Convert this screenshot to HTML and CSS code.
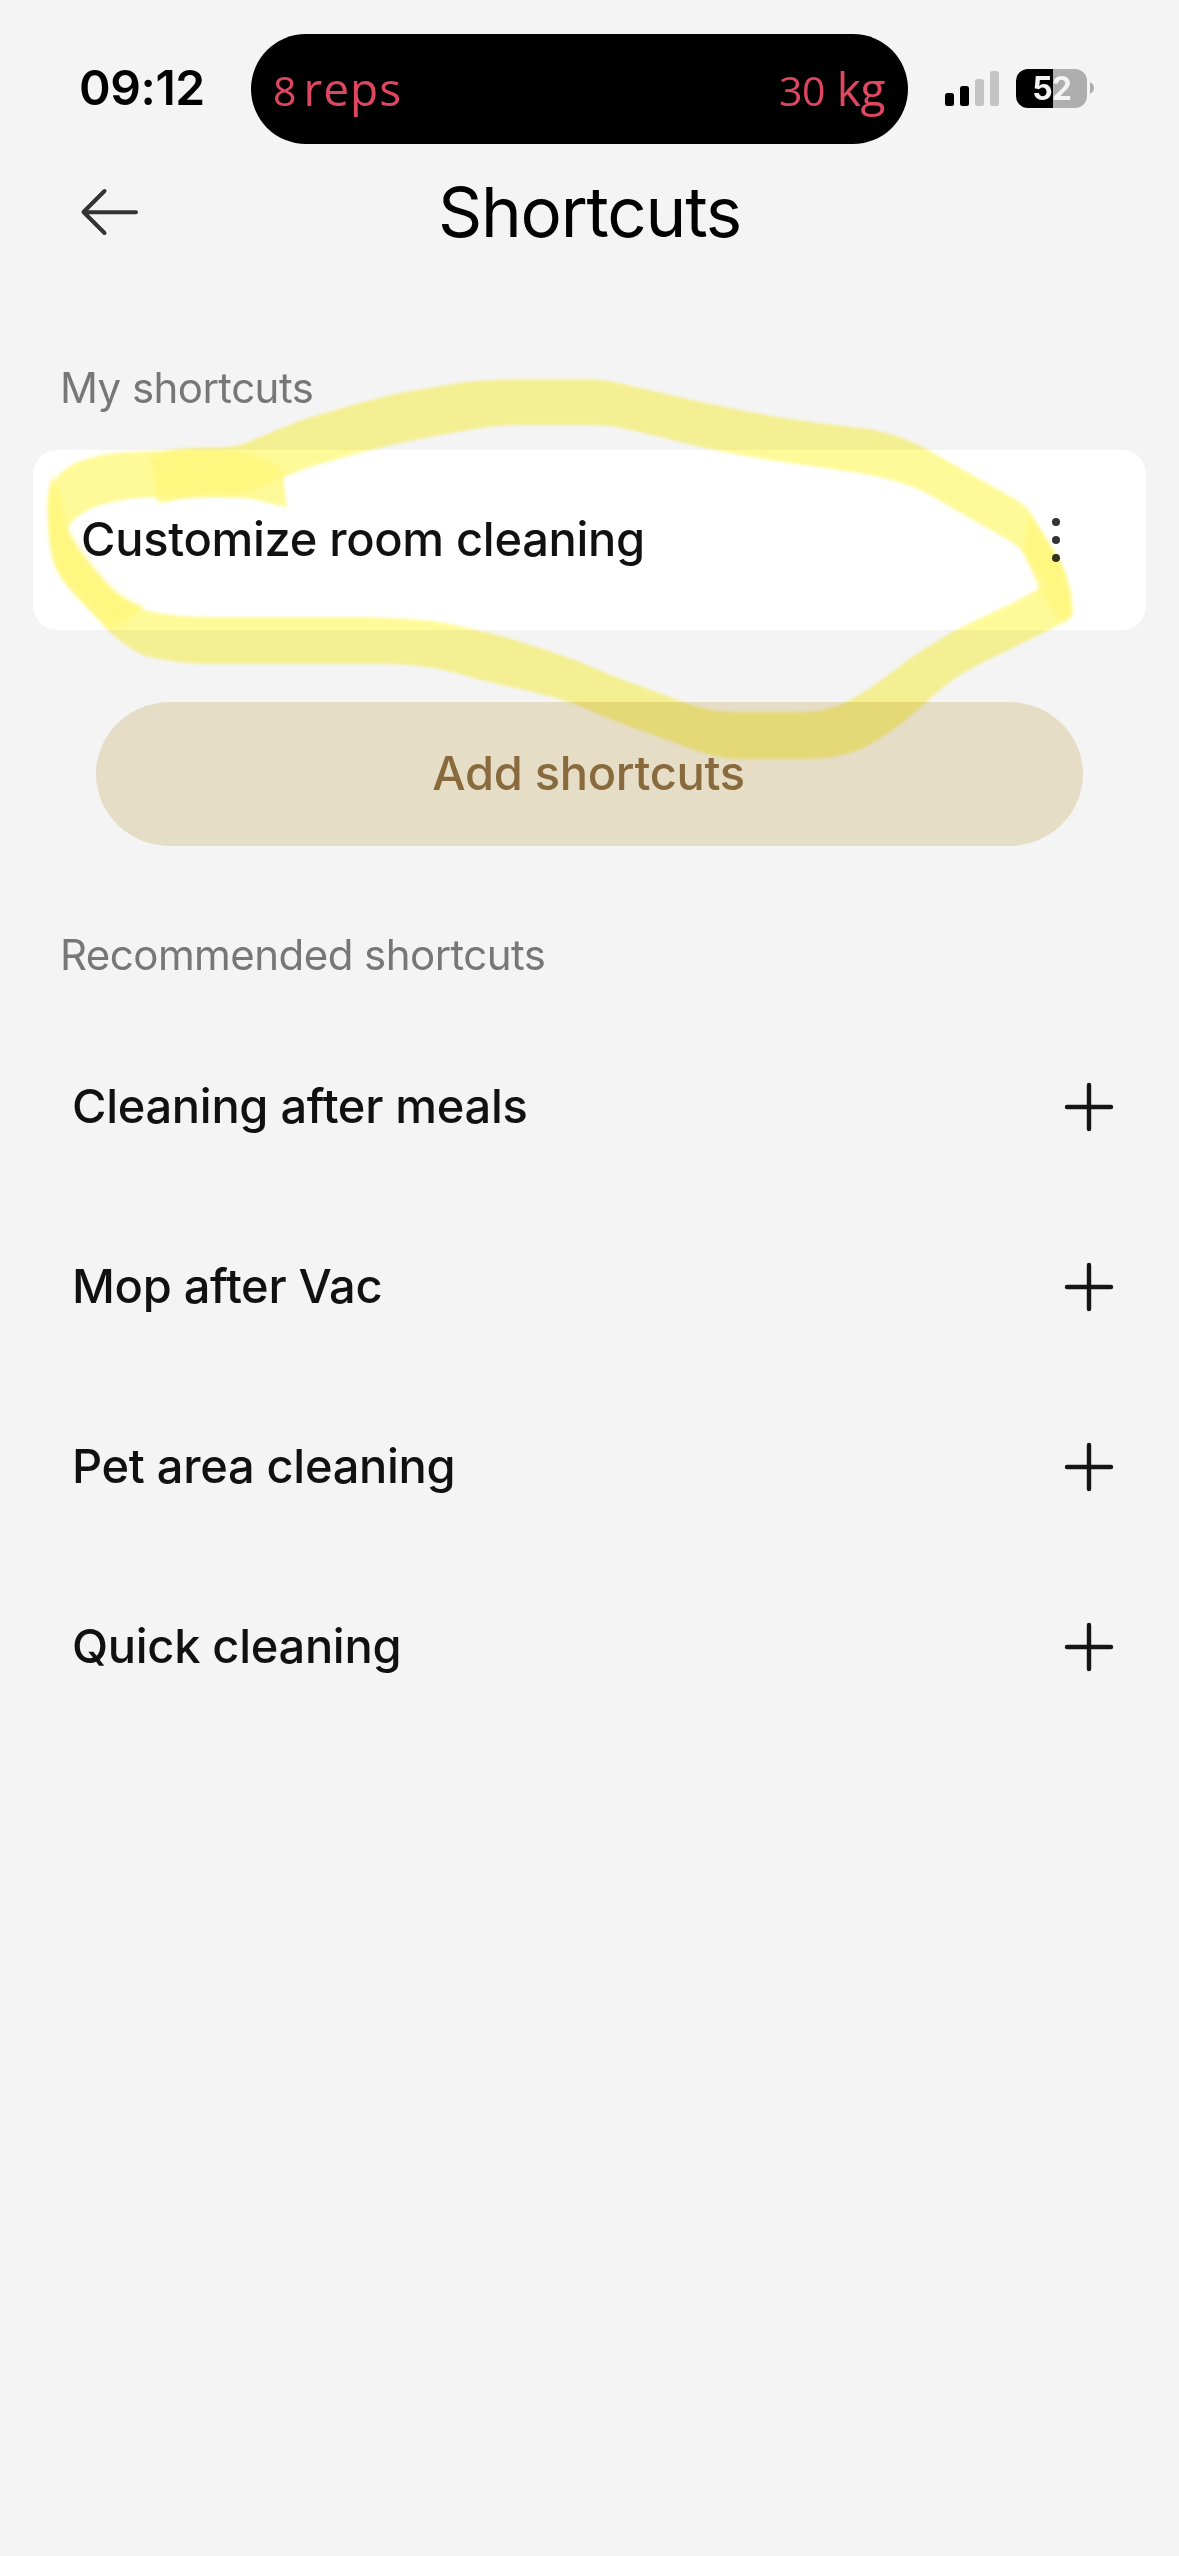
FILE: index.html
```html
<!DOCTYPE html>
<html lang="en">
<head>
<meta charset="utf-8">
<title>Shortcuts</title>
<link rel="stylesheet" href="styles.css">
</head>
<body>
<div class="screen">
  <div class="status-bar">
    <time class="clock">09:12</time>
    <div class="island">
      <span class="metric"><span class="num">8</span><span class="unit">reps</span></span>
      <span class="metric metric-weight"><span class="num">30</span><span class="unit">kg</span></span>
    </div>
    <svg class="signal" width="54" height="36" viewBox="0 0 54 36">
      <rect x="0" y="22" width="9" height="13" rx="2.5" fill="#000"/>
      <rect x="15" y="15" width="9" height="20" rx="2.5" fill="#000"/>
      <rect x="30" y="8" width="9" height="27" rx="2.5" fill="#c4c4c4"/>
      <rect x="45" y="0" width="9" height="35" rx="2.5" fill="#c4c4c4"/>
    </svg>
    <div class="battery"><span class="battery-body">52</span><svg class="battery-nub" width="4" height="12" viewBox="0 0 4 12"><path d="M0 0 C5.3 2.5 5.3 9.500 0 12 Z" fill="#aeaeae"/></svg></div>
  </div>

  <header class="header">
    <svg class="back" width="60" height="48" viewBox="0 0 60 48" fill="none" stroke="#333" stroke-width="4" stroke-linecap="round" stroke-linejoin="round">
      <path d="M25.500 3 L4.500 24 L25.500 45 M4.500 24 L57 24.300"/>
    </svg>
    <h1 class="title">Shortcuts</h1>
  </header>

  <main>
    <h2 class="section-label">My shortcuts</h2>
    <div class="card">
      <span class="label">Customize room cleaning</span>
      <svg class="more" width="10" height="46" viewBox="0 0 10 46" fill="#333">
        <circle cx="5" cy="5" r="4"/><circle cx="5" cy="23" r="4"/><circle cx="5" cy="41" r="4"/>
      </svg>
    </div>
    <button class="add-button" type="button"><span class="label">Add shortcuts</span></button>

    <h2 class="section-label recommended">Recommended shortcuts</h2>
    <ul class="list">
      <li class="row"><span class="label">Cleaning after meals</span><svg class="plus" width="50" height="50" viewBox="0 0 50 50"><path d="M25 3 V47 M3 25 H47"/></svg></li>
      <li class="row"><span class="label">Mop after Vac</span><svg class="plus" width="50" height="50" viewBox="0 0 50 50"><path d="M25 3 V47 M3 25 H47"/></svg></li>
      <li class="row"><span class="label">Pet area cleaning</span><svg class="plus" width="50" height="50" viewBox="0 0 50 50"><path d="M25 3 V47 M3 25 H47"/></svg></li>
      <li class="row"><span class="label">Quick cleaning</span><svg class="plus" width="50" height="50" viewBox="0 0 50 50"><path d="M25 3 V47 M3 25 H47"/></svg></li>
    </ul>
  </main>

  <!-- Hand-drawn marker loop over the saved shortcut -->
  <svg class="marker" width="1179" height="800" viewBox="0 0 1179 800">
    <defs>
      <path id="end" d="M151 457 Q175 448 205 448 Q228 448 240 445 C260 438 290 423 318 415 C350 406 400 391 430 388 C460 382 480 380 510 379.500 H592 C610 380 622 384 640 388 C670 395 700 402 740 410 C790 420 840 426 870 429 C905 437 915 443 930 451 L1020 502 Q1027 507 1032 515 L1057 556 C1069 575 1071 598 1072 613 Q1071 618 1060 622 L1040 590 L1024 553 Q1018 546 1008 540 L935 498 C910 483 890 480 870 475 C830 468 790 464 740 455 C700 448 660 436 617 427 Q606 425 590 425 H520 C490 425 470 430 430 437 C380 446 335 460 310 467 C285 475 260 490 235 496 Q200 493 175 500 Q160 505 157 500 Z"/>
      <path id="start" d="M287 507 C262 502 250 497 230 497 H165 C120 497 80 505 67 529 C66 540 72 545 85 560 C100 580 118 600 140 609 C160 614 180 617 210 617 H365 C400 618 430 620 450 624 C510 636 560 655 580 662 C620 680 650 689 670 697 Q705 712 735 712 H800 Q830 712 850 700 C880 685 910 655 935 643 C960 624 1010 608 1044 585 L1072 613 Q1071 618 1060 624 C1035 638 985 660 960 675 C930 695 915 715 895 728 C860 755 835 759 800 759 H735 C705 756 690 748 670 741 C635 728 610 720 580 706 C540 691 500 686 470 677 Q430 664 380 664 H210 C185 664 165 660 145 656 Q125 647 108 630 C90 610 70 592 60 575 C50 558 48 530 48 500 C50 470 80 454 130 452 C180 450 225 448 248 454 Q275 462 282 470 Z"/>
      <clipPath id="start-clip"><use href="#start"/></clipPath>
    </defs>
    <g class="marker-ink"><use href="#end"/><use href="#start"/></g>
    <g class="marker-overlap">
      <use href="#end" clip-path="url(#start-clip)"/>
      <path d="M52 475 Q63 500 67 528 C78 550 98 574 112 589 Q130 604 145 607 L112 630 C90 605 65 586 56 565 Q45 530 52 475 Z"/>
      <path d="M1028 515 L1058 560 Q1072 588 1071 612 Q1060 612 1056 600 L1024 552 Z"/>
    </g>
  </svg>
</div>
</body>
</html>
```

FILE: styles.css
```css
* { box-sizing: border-box; }

body {
  margin: 0;
  background: #f4f4f4;
  font-family: Inter, "Liberation Sans", sans-serif;
  color: #111;
}

.screen {
  position: relative;
  width: 1179px;
  height: 2556px;
  overflow: hidden;
}

/* Status bar */
.status-bar {
  display: flex;
  align-items: center;
  height: 144px;
  padding: 34px 0 0 79px;
}

.clock {
  width: 172px;
  font-size: 48px;
  font-weight: 600;
  line-height: 60px;
  letter-spacing: -0.4px;
  padding-bottom: 2px;
  color: #000;
}

.island {
  display: flex;
  align-items: center;
  justify-content: space-between;
  width: 657px;
  height: 110px;
  padding: 0 23px 0 22px;
  border-radius: 55px;
  background: #000;
  color: #df4660;
  font-family: "Open Sans", sans-serif;
}

.metric {
  display: flex;
  align-items: baseline;
  gap: 7px;
  line-height: 60px;
}

.metric-weight { gap: 12px; }
.num { font-size: 41px; }
.unit { font-size: 46px; letter-spacing: 1px; }
.metric-weight .num { letter-spacing: -0.5px; }
.metric-weight .unit { letter-spacing: -0.5px; }

.signal {
  margin-left: 37px;
}

.battery {
  display: flex;
  align-items: center;
  gap: 3px;
  margin: -2px 0 0 17px;
}

.battery-body {
  width: 71px;
  height: 39px;
  border-radius: 12px;
  background: linear-gradient(90deg, #000 37px, #aeaeae 37px);
  color: #f4f4f4;
  font-size: 32px;
  font-weight: 700;
  line-height: 39px;
  letter-spacing: -1px;
  text-align: center;
}

/* Header */
.header {
  display: grid;
  grid-template-columns: 80px 1fr 80px;
  align-items: center;
  height: 137px;
  padding: 0 79px 2px;
}

.title {
  margin: 0;
  font-size: 69px;
  font-weight: 400;
  line-height: 80px;
  letter-spacing: -1.2px;
  text-align: center;
  color: #000;
}

/* Sections */
.section-label {
  margin: 0;
  padding: 82px 60px 0;
  height: 169px;
  font-size: 42px;
  font-weight: 400;
  line-height: 50px;
  letter-spacing: -0.55px;
  color: #777;
}

.section-label.recommended {
  padding-top: 84px;
  height: 171px;
}

.label {
  padding-bottom: 2px;
  font-size: 47px;
  font-weight: 500;
  line-height: 60px;
  letter-spacing: -0.3px;
}

.card {
  display: flex;
  align-items: center;
  justify-content: space-between;
  height: 180px;
  margin: 0 33px;
  padding: 0 85px 0 48px;
  border-radius: 24px;
  background: #fff;
}

.add-button {
  display: flex;
  align-items: center;
  justify-content: center;
  width: 987px;
  height: 144px;
  margin: 72px auto 0;
  padding: 0 2px 0 0;
  border: 0;
  border-radius: 74px / 72px;
  background: #e5ddc6;
  color: #886a3c;
  font-family: inherit;
}

.list {
  margin: 0;
  padding: 0;
  list-style: none;
}

.row {
  display: flex;
  align-items: center;
  justify-content: space-between;
  height: 180px;
  padding: 0 65px 0 72px;
}

.plus {
  fill: none;
  stroke: #151515;
  stroke-width: 4.4;
  stroke-linecap: round;
}

/* Marker */
.marker {
  position: absolute;
  top: 0;
  left: 0;
  mix-blend-mode: multiply;
  pointer-events: none;
}

.marker-ink {
  fill: #fffa99;
  filter: blur(1.5px);
}

.marker-overlap {
  fill: #fff780;
  filter: blur(2.5px);
}
```
